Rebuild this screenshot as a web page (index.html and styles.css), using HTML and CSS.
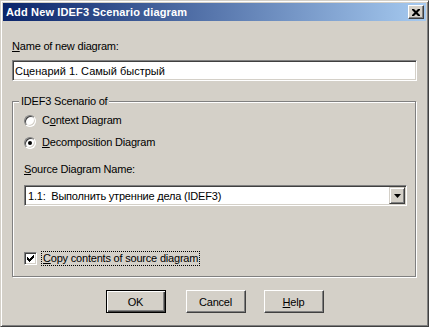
FILE: index.html
```html
<!DOCTYPE html>
<html>
<head>
<meta charset="utf-8">
<link rel="stylesheet" href="styles.css">
</head>
<body>
<div class="window">
  <div class="titlebar">
    <span class="title">Add New IDEF3 Scenario diagram</span>
    <span class="close">
      <svg width="8" height="7" viewBox="0 0 8 7"><path d="M0 0h2l2 2 2-2h2v1l-2.5 2.5L8 6v1H6L4 5 2 7H0V6l2.5-2.5L0 1z" fill="#000"/></svg>
    </span>
  </div>
  <div class="content">
    <div class="label"><u>N</u>ame of new diagram:</div>
    <div class="field">Сценарий 1. Самый быстрый</div>
    <div class="group">
      <span class="legend">IDEF3 Scenario of</span>
      <div class="option first"><span class="radio"></span><span class="opt-text">C<u>o</u>ntext Diagram</span></div>
      <div class="option second"><span class="radio checked"></span><span class="opt-text"><u>D</u>ecomposition Diagram</span></div>
      <div class="label source"><u>S</u>ource Diagram Name:</div>
      <div class="combo">
        <span class="combo-text">1.1:  Выполнить утренние дела (IDEF3)</span>
        <span class="combo-btn"><svg width="7" height="4" viewBox="0 0 7 4"><path d="M0 0h7L3.5 4z" fill="#000"/></svg></span>
      </div>
      <div class="check-row">
        <span class="checkbox"><svg width="7" height="7" viewBox="0 0 7 7"><path d="M0 2h1v1h1v1h1V3h1V2h1V1h1V0h1v3H6v1H5v1H4v1H3v1H2V6H1V5H0z" fill="#000"/></svg></span>
        <span class="focus"><u>C</u>opy contents of source diagram</span>
      </div>
    </div>
    <div class="buttons">
      <span class="btn default">OK</span>
      <span class="btn cancel">Cancel</span>
      <span class="btn help"><u>H</u>elp</span>
    </div>
  </div>
</div>
</body>
</html>
```
FILE: styles.css
```css
* { box-sizing: border-box; }
html, body { margin: 0; padding: 0; }
body {
  width: 429px; height: 327px; overflow: hidden;
  background: #d4d0c8;
  font-family: "Liberation Sans", Arial, sans-serif;
  font-size: 11px; color: #000;
}
u { text-decoration: underline; text-underline-offset: 1px; }
.window {
  width: 429px; height: 327px;
  border: 1px solid; border-color: #d4d0c8 #404040 #404040 #d4d0c8;
  box-shadow: inset 1px 1px #fff, inset -1px -1px #808080;
  padding: 2px;
  display: flex; flex-direction: column;
  background: #d4d0c8;
}
.titlebar {
  height: 18px; flex: none;
  display: flex; align-items: center; justify-content: space-between;
  padding: 0 2px 0 3px;
  background: linear-gradient(to right, #0a246a, #a6caf0);
}
.title { color: #fff; font-weight: bold; font-size: 11px; line-height: 13px; letter-spacing: 0.15px; }
.close {
  width: 16px; height: 14px;
  display: flex; align-items: center; justify-content: center;
  background: #d4d0c8;
  border: 1px solid; border-color: #fff #404040 #404040 #fff;
  box-shadow: inset -1px -1px #808080;
}
.content { display: flex; flex-direction: column; padding-left: 9px; letter-spacing: -0.2px; }
.label { line-height: 13px; height: 13px; margin-top: 19px; }
.field {
  margin-top: 7px; width: 405px; height: 21px;
  background: #fff;
  border: 1px solid; border-color: #808080 #fff #fff #808080;
  box-shadow: inset 1px 1px #404040, inset -1px -1px #d4d0c8;
  display: flex; align-items: center; padding-left: 2px;
  letter-spacing: 0;
}
.group {
  margin-top: 20px; width: 404px;
  border: 1px solid #808080;
  box-shadow: inset 1px 1px #fff, 1px 1px #fff;
  padding: 0 8px 11px 11px;
  display: flex; flex-direction: column; align-items: flex-start;
}
.legend {
  margin: -7px 0 0 -5px; padding: 0 2px;
  line-height: 13px; height: 13px;
  background: #d4d0c8;
}
.option { display: flex; align-items: center; height: 13px; }
.option.first { margin-top: 6px; }
.option.second { margin-top: 9px; }
.opt-text { margin-left: 6px; line-height: 13px; }
.radio {
  width: 12px; height: 12px; border-radius: 50%;
  background: #fff;
  border: 1px solid; border-color: #808080 #fff #fff #808080;
  box-shadow: inset 1px 1px #404040, inset -1px -1px #d4d0c8;
  display: flex; align-items: center; justify-content: center;
}
.radio.checked::after {
  content: ""; width: 4px; height: 4px; border-radius: 50%; background: #000;
}
.label.source { margin-top: 14px; }
.combo {
  margin-top: 9px; width: 383px; height: 21px;
  background: #fff;
  border: 1px solid; border-color: #808080 #fff #fff #808080;
  box-shadow: inset 1px 1px #404040, inset -1px -1px #d4d0c8;
  padding: 1px;
  display: flex; align-items: center; justify-content: space-between;
}
.combo-text { white-space: pre; padding-left: 2px; }
.combo-btn {
  width: 16px; height: 17px;
  background: #d4d0c8;
  border: 1px solid; border-color: #d4d0c8 #404040 #404040 #d4d0c8;
  box-shadow: inset 1px 1px #fff, inset -1px -1px #808080;
  display: flex; align-items: center; justify-content: center;
}
.check-row { margin-top: 46px; display: flex; align-items: center; height: 13px; }
.checkbox {
  width: 13px; height: 13px; background: #fff;
  border: 1px solid; border-color: #808080 #fff #fff #808080;
  box-shadow: inset 1px 1px #404040, inset -1px -1px #d4d0c8;
  display: flex; align-items: center; justify-content: center;
}
.focus {
  margin-left: 4px; border: 1px dotted #000; padding: 0 1px;
  line-height: 13px;
}
.buttons { display: flex; justify-content: center; margin-top: 13px; padding-right: 9px; }
.btn {
  width: 60px; height: 23px;
  display: flex; align-items: center; justify-content: center;
  border: 1px solid; border-color: #fff #404040 #404040 #fff;
  box-shadow: inset -1px -1px #808080;
  background: #d4d0c8;
}
.btn.default {
  border-color: #000;
  box-shadow: inset 1px 1px #fff, inset -1px -1px #404040, inset -2px -2px #808080;
}
.btn.cancel { margin-left: 20px; }
.btn.help { margin-left: 18px; }
```
